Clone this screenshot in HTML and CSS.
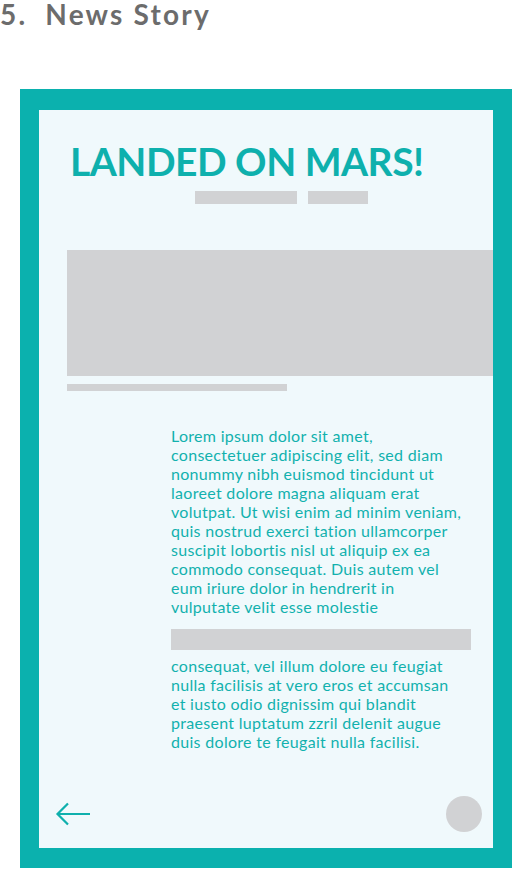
FILE: index.html
```html
<!DOCTYPE html>
<html>
<head>
<meta charset="utf-8">
<link rel="stylesheet" href="styles.css">
</head>
<body>
<h1 class="section-title">5.&nbsp; News Story</h1>
<div class="phone">
  <div class="screen">
    <h2 class="headline">LANDED ON MARS!</h2>
    <div class="byline">
      <span class="bar bar-a"></span>
      <span class="bar bar-b"></span>
    </div>
    <div class="hero"></div>
    <div class="caption"></div>
    <div class="article">
      <p class="copy">Lorem ipsum dolor sit amet,<br>consectetuer adipiscing elit, sed diam<br>nonummy nibh euismod tincidunt ut<br>laoreet dolore magna aliquam erat<br>volutpat. Ut wisi enim ad minim veniam,<br>quis nostrud exerci tation ullamcorper<br>suscipit lobortis nisl ut aliquip ex ea<br>commodo consequat. Duis autem vel<br>eum iriure dolor in hendrerit in<br>vulputate velit esse molestie</p>
      <div class="quote-bar"></div>
      <p class="copy copy-2">consequat, vel illum dolore eu feugiat<br>nulla facilisis at vero eros et accumsan<br>et iusto odio dignissim qui blandit<br>praesent luptatum zzril delenit augue<br>duis dolore te feugait nulla facilisi.</p>
    </div>
    <div class="footer">
      <svg class="back" width="36" height="24" viewBox="0 0 36 24" aria-hidden="true">
        <path d="M13 1.5 L2.5 12 L13 22.5 M2.5 12 H35" fill="none" stroke="#0fb0ad" stroke-width="2.2"/>
      </svg>
      <span class="dot"></span>
    </div>
  </div>
</div>
</body>
</html>
```

FILE: styles.css
```css
html, body {
  margin: 0;
  padding: 0;
  background: #ffffff;
}

.section-title {
  margin: 0;
  font-family: Lato, "Liberation Sans", sans-serif;
  font-weight: 700;
  font-size: 28px;
  line-height: 29px;
  color: #6c6c6c;
  letter-spacing: 2.2px;
}

.phone {
  margin: 60px 0 0 20px;
  width: 454px;
  height: 738px;
  border-style: solid;
  border-color: #0bb1ae;
  border-width: 21px 19px 20px 19px;
  background: #f0f9fc;
}

.screen {
  height: 100%;
  display: flex;
  flex-direction: column;
  font-family: Lato, "Liberation Sans", sans-serif;
  color: #12b1ae;
}

.headline {
  margin: 27px 0 0 31px;
  font-size: 39px;
  font-weight: 700;
  line-height: 48px;
  letter-spacing: -0.5px;
  color: #0eb0ad;
}

.byline {
  display: flex;
  gap: 11px;
  margin: 6px 0 0 156px;
}

.bar {
  display: block;
  height: 13px;
  background: #d1d2d4;
}

.bar-a { width: 102px; }
.bar-b { width: 60px; }

.hero {
  margin: 46px 0 0 28px;
  height: 126px;
  background: #d1d2d4;
}

.caption {
  margin: 8px 0 0 28px;
  width: 220px;
  height: 7px;
  background: #d1d2d4;
}

.article {
  margin: 35px 0 0 132px;
  width: 300px;
}

.copy {
  margin: 0;
  font-size: 16px;
  line-height: 19px;
  letter-spacing: 0.3px;
  white-space: nowrap;
}

.quote-bar {
  margin-top: 13px;
  height: 21px;
  background: #d1d2d4;
}

.copy-2 {
  margin-top: 6px;
}

.footer {
  margin-top: auto;
  display: flex;
  justify-content: space-between;
  align-items: center;
  padding: 0 11px 16px 16px;
}

.back {
  display: block;
}

.dot {
  width: 36px;
  height: 36px;
  border-radius: 50%;
  background: #d1d2d4;
}
```
